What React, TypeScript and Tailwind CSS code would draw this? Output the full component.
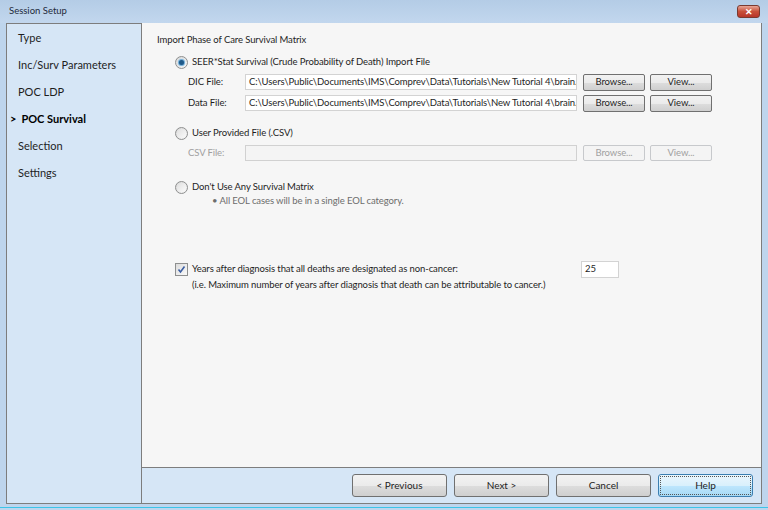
import React from "react";

const font = { fontFamily: 'Lato, "Noto Sans", sans-serif' };

const btnBg = "bg-[linear-gradient(to_bottom,#f2f2f2_0%,#ebebeb_50%,#dddddd_51%,#cfcfcf_100%)]";

function Radio({ checked }: { checked?: boolean }) {
  return (
    <span className="relative inline-flex h-[13px] w-[13px] shrink-0 items-center justify-center rounded-full border border-[#8e8f8f] bg-gradient-to-br from-[#d8d8d8] to-[#f8f8f8]">
      <span className="flex h-[9px] w-[9px] items-center justify-center rounded-full bg-gradient-to-br from-[#e0e0e0] to-[#fbfbfb]">
        {checked && <span className="h-[5px] w-[5px] rounded-full bg-[#1f5a8a] shadow-[0_0_1px_1px_#62a6d6]" />}
      </span>
    </span>
  );
}

function Checkbox() {
  return (
    <span className="inline-flex h-[13px] w-[13px] shrink-0 items-center justify-center border border-[#8e8f8f] bg-gradient-to-br from-[#dcdcdc] to-[#fafafa]">
      <svg width="9" height="9" viewBox="0 0 9 9">
        <path d="M1.5 4.5 L3.5 7 L7.5 1.5" fill="none" stroke="#3b5ea3" strokeWidth="1.6" />
      </svg>
    </span>
  );
}

function FileRow({ label, value, disabled }: { label: string; value: string; disabled?: boolean }) {
  return (
    <div className="flex h-[16px] items-center">
      <div className={`w-[57px] ${disabled ? "text-[#a0a0a0]" : "text-[#1e1e1e]"}`}>{label}</div>
      <div
        className={`flex h-[16px] w-[332px] items-center overflow-hidden whitespace-nowrap border px-[3px] ${
          disabled ? "border-[#d1d1d1] bg-[#f4f4f4]" : "border-[#d3d3d3] bg-white text-[#1e1e1e]"
        }`}
      >
        {value}
      </div>
      <div className="ml-[6px] flex gap-[5px]">
        {disabled ? (
          <>
            <div className="flex h-[16px] w-[62px] items-center justify-center rounded-[2px] border border-[#c7c9cc] bg-[#f4f4f4] text-[#a0a0a0]">Browse...</div>
            <div className="flex h-[16px] w-[62px] items-center justify-center rounded-[2px] border border-[#c7c9cc] bg-[#f4f4f4] text-[#a0a0a0]">View...</div>
          </>
        ) : (
          <>
            <div className={`flex h-[17px] w-[62px] items-center justify-center rounded-[2px] border border-[#707070] ${btnBg} text-[#1e1e1e]`}>Browse...</div>
            <div className={`flex h-[17px] w-[62px] items-center justify-center rounded-[2px] border border-[#707070] ${btnBg} text-[#1e1e1e]`}>View...</div>
          </>
        )}
      </div>
    </div>
  );
}

export default function App() {
  const path = "C:\\Users\\Public\\Documents\\IMS\\Comprev\\Data\\Tutorials\\New Tutorial 4\\brain.a";
  const nav = ["Type", "Inc/Surv Parameters", "POC LDP", "POC Survival", "Selection", "Settings"];
  return (
    <div className="flex h-[510px] w-[768px] flex-col overflow-hidden bg-[#bed5ed] text-[#1e1e1e]" style={font}>
      {/* title bar */}
      <div className="flex h-[23px] items-center justify-between bg-[linear-gradient(to_bottom,#b4cce6,#c2d7ee)] pl-[9px] pr-[8px]">
        <span className="text-[9.5px] text-[#1e2a3a]">Session Setup</span>
        <div className="flex h-[13px] w-[23px] items-center justify-center rounded-[3px] border border-[#7a3a30] bg-[linear-gradient(to_bottom,#e8a596,#c8503a_50%,#b8362a)]">
          <span className="text-[9px] font-bold leading-none text-white">✕</span>
        </div>
      </div>
      {/* body */}
      <div className="ml-[6px] flex h-[481px] w-[756px]">
        <div className="flex w-[136px] flex-col border border-[#7d7d7d] bg-[#d6e6f6] pt-[1px] text-[11px]">
          {nav.map((n) => (
            <div key={n} className="flex h-[27px] items-center">
              {n === "POC Survival" ? (
                <span className="pl-[3px] font-bold text-black">
                  <span className="mr-[5px]">&gt;</span>
                  {n}
                </span>
              ) : (
                <span className="pl-[11px]">{n}</span>
              )}
            </div>
          ))}
        </div>
        <div className="flex flex-1 flex-col border-r border-b border-[#7d7d7d]">
          <div className="flex-1 border-b border-[#7d7d7d] bg-[#f6f6f6] pl-[15px] pt-[9px] text-[9.5px] tracking-[-0.1px]">
            <div className="h-[16px] leading-[16px]">Import Phase of Care Survival Matrix</div>
            <div className="ml-[18px] mt-[7px] flex h-[14px] items-center gap-[4px]">
              <Radio checked />
              <span>SEER*Stat Survival (Crude Probability of Death) Import File</span>
            </div>
            <div className="ml-[31px] mt-[5px] flex flex-col gap-[5px]">
              <FileRow label="DIC File:" value={path} />
              <FileRow label="Data File:" value={path} />
            </div>
            <div className="ml-[18px] mt-[15px] flex h-[14px] items-center gap-[4px]">
              <Radio />
              <span>User Provided File (.CSV)</span>
            </div>
            <div className="ml-[31px] mt-[5px]">
              <FileRow label="CSV File:" value="" disabled />
            </div>
            <div className="ml-[18px] mt-[19px] flex h-[14px] items-center gap-[4px]">
              <Radio />
              <span>Don't Use Any Survival Matrix</span>
            </div>
            <div className="ml-[55px] h-[14px] text-[#6d6d6d]">• All EOL cases will be in a single EOL category.</div>
            <div className="ml-[18px] mt-[53px] flex items-center">
              <Checkbox />
              <span className="ml-[4px] w-[389px]">Years after diagnosis that all deaths are designated as non-cancer:</span>
              <div className="flex h-[17px] w-[38px] items-center border border-[#d3d3d3] bg-white px-[3px]">25</div>
            </div>
            <div className="ml-[35px]">(i.e. Maximum number of years after diagnosis that death can be attributable to cancer.)</div>
          </div>
          <div className="flex h-[35px] items-center justify-end gap-[7px] bg-[#d6e6f6] pr-[8px] text-[10px]">
            <div className={`flex h-[23px] w-[95px] items-center justify-center rounded-[3px] border border-[#707070] ${btnBg}`}>&lt; Previous</div>
            <div className={`flex h-[23px] w-[95px] items-center justify-center rounded-[3px] border border-[#707070] ${btnBg}`}>Next &gt;</div>
            <div className={`flex h-[23px] w-[95px] items-center justify-center rounded-[3px] border border-[#707070] ${btnBg}`}>Cancel</div>
            <div className="flex h-[23px] w-[95px] items-center justify-center rounded-[3px] border border-[#3c7fb1] bg-[linear-gradient(to_bottom,#eaf6fd_0%,#d9f0fc_50%,#bee6fd_51%,#a7d9f5_100%)] p-[1px]">
              <div className="flex h-full w-full items-center justify-center border border-dotted border-[#555]">Help</div>
            </div>
          </div>
        </div>
      </div>
      <div className="mt-[3px] h-[1px] bg-[#3cc4e8]" />
    </div>
  );
}
